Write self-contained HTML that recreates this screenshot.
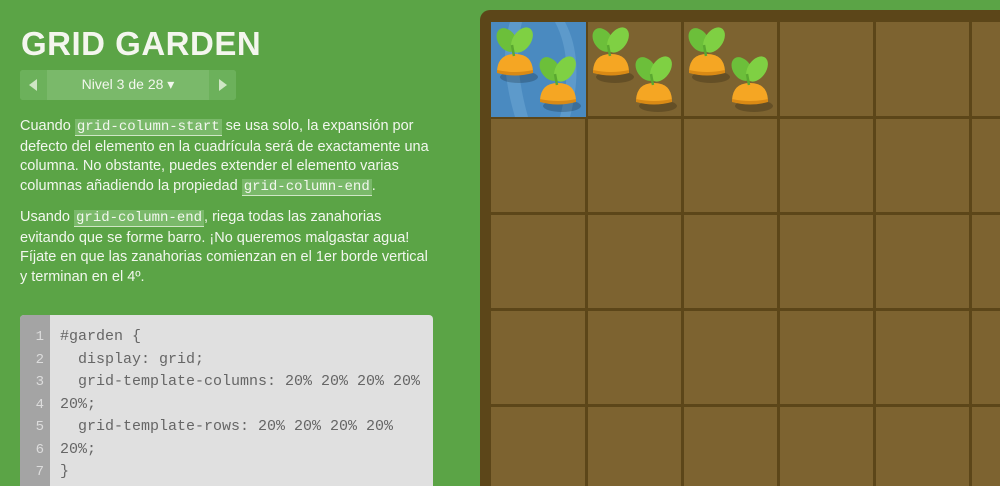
<!DOCTYPE html>
<html><head><meta charset="utf-8"><style>
*{margin:0;padding:0;box-sizing:border-box}
html,body{width:1000px;height:486px;overflow:hidden}
body{background:#5ba446;font-family:"Liberation Sans",sans-serif;color:#f2f7ee;position:relative}
h1{position:absolute;left:21px;top:25px;font-size:33px;letter-spacing:0.5px;font-weight:bold;color:#f4f6ee;font-family:"Liberation Sans",sans-serif}
.nav{position:absolute;left:20px;top:70px;width:216px;height:30px;background:#7ab96a;border-radius:3px}
.nav .b{position:absolute;top:0;width:27px;height:30px;background:#6cb15b}
.nav .l{left:0;border-radius:3px 0 0 3px}.nav .r{right:0;border-radius:0 3px 3px 0}
.nav .t{position:absolute;left:0;right:0;top:6px;text-align:center;font-size:14px;color:#f2f7ee}
p{position:absolute;left:20px;width:410px;font-size:14.5px;line-height:19.5px}
code{font-family:"Liberation Mono",monospace;background:#7ab96a;padding:0 2px;border-bottom:1px solid #cfe6c5;font-size:14px}
.code{position:absolute;left:20px;top:315px;width:413px;height:171px;background:#e0e0e0;border-radius:4px 4px 0 0;overflow:hidden}
.gut{position:absolute;left:0;top:0;width:30px;height:100%;background:#a4a4a4}
.code pre{position:absolute;top:11px;font-family:"Liberation Mono",monospace;font-size:15px;line-height:22.5px;color:#666}
.gut pre{left:0;width:24px;text-align:right;color:#dcdcdc;font-size:14px}
.garden{position:absolute;left:480px;top:10px;width:540px;height:500px;background:#5c4619;border-radius:10px}
</style></head><body>
<h1>GRID GARDEN</h1>
<div class="nav"><div class="b l"><svg width="27" height="30"><path d="M17 9 L17 21 L9 15Z" fill="#cfe6c5"/></svg></div><div class="t">Nivel 3 de 28 ▾</div><div class="b r"><svg width="27" height="30"><path d="M10 9 L10 21 L18 15Z" fill="#cfe6c5"/></svg></div></div>
<p style="top:117px">Cuando <code>grid-column-start</code> se usa solo, la expansión por defecto del elemento en la cuadrícula será de exactamente una columna. No obstante, puedes extender el elemento varias columnas añadiendo la propiedad <code>grid-column-end</code>.</p>
<p style="top:208px">Usando <code>grid-column-end</code>, riega todas las zanahorias evitando que se forme barro. ¡No queremos malgastar agua! Fíjate en que las zanahorias comienzan en el 1er borde vertical y terminan en el 4º.</p>
<div class="code"><div class="gut"><pre>1
2
3
4
5
6
7</pre></div><pre style="left:40px">#garden {
  display: grid;
  grid-template-columns: 20% 20% 20% 20%
20%;
  grid-template-rows: 20% 20% 20% 20%
20%;
}</pre></div>
<div class="garden"></div>
<svg style="position:absolute;left:0;top:0" width="1000" height="486">
<defs><g id="c"><ellipse cx="22" cy="50" rx="19" ry="6" fill="#000" opacity=".2"/><path d="M0 44 Q1 27 18 27 Q35 27 36 44 Q18 49 0 44Z" fill="#f5a623"/><path d="M0 43 Q18 47 36 43 L36 46 Q18 51 0 46Z" fill="#d98a15"/><ellipse cx="10" cy="13" rx="9" ry="13" transform="rotate(-35 10 13)" fill="#6cbf3a"/><ellipse cx="25" cy="13" rx="9" ry="14" transform="rotate(35 25 13)" fill="#7fd043"/><path d="M15 18 L17 29" stroke="#5aa830" stroke-width="2.5"/></g></defs>
<g fill="#7d6330">
<rect x="491" y="22" width="95" height="95" fill="#4a8ac0"/><path d="M510 22 Q498 60 515 117 L528 117 Q512 60 522 22Z" fill="#5d9acb"/><path d="M555 22 Q575 60 560 117 L570 117 Q585 60 565 22Z" fill="#5d9acb"/>
<rect x="588" y="22" width="93" height="94"/><rect x="684" y="22" width="93" height="94"/><rect x="780" y="22" width="93" height="94"/><rect x="876" y="22" width="93" height="94"/><rect x="972" y="22" width="93" height="94"/>
<rect x="491" y="119" width="94" height="93"/><rect x="588" y="119" width="93" height="93"/><rect x="684" y="119" width="93" height="93"/><rect x="780" y="119" width="93" height="93"/><rect x="876" y="119" width="93" height="93"/><rect x="972" y="119" width="93" height="93"/>
<rect x="491" y="215" width="94" height="93"/><rect x="588" y="215" width="93" height="93"/><rect x="684" y="215" width="93" height="93"/><rect x="780" y="215" width="93" height="93"/><rect x="876" y="215" width="93" height="93"/><rect x="972" y="215" width="93" height="93"/>
<rect x="491" y="311" width="94" height="93"/><rect x="588" y="311" width="93" height="93"/><rect x="684" y="311" width="93" height="93"/><rect x="780" y="311" width="93" height="93"/><rect x="876" y="311" width="93" height="93"/><rect x="972" y="311" width="93" height="93"/>
<rect x="491" y="407" width="94" height="93"/><rect x="588" y="407" width="93" height="93"/><rect x="684" y="407" width="93" height="93"/><rect x="780" y="407" width="93" height="93"/><rect x="876" y="407" width="93" height="93"/><rect x="972" y="407" width="93" height="93"/>
</g>
<use href="#c" x="497" y="27"/><use href="#c" x="540" y="56"/>
<use href="#c" x="593" y="27"/><use href="#c" x="636" y="56"/>
<use href="#c" x="689" y="27"/><use href="#c" x="732" y="56"/>
</svg>
</body></html>
